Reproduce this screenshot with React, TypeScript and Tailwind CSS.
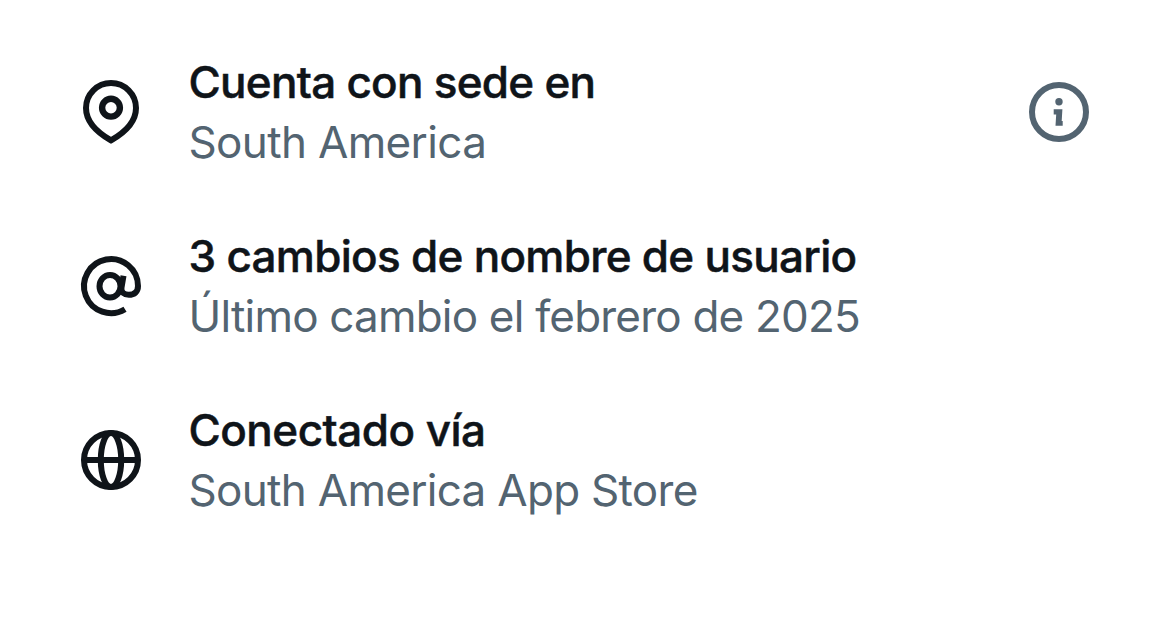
import React from "react";

function PinIcon() {
  return (
    <svg viewBox="0 0 72 72" className="h-[72px] w-[72px]" fill="none" stroke="currentColor" strokeWidth="6">
      <path d="M36 7C22.2 7 11 18.2 11 32c0 14.5 12.6 25.3 25 32.4C48.4 57.3 61 46.5 61 32 61 18.2 49.8 7 36 7z" />
      <circle cx="36" cy="31.7" r="8.9" strokeWidth="6.4" />
    </svg>
  );
}

function AtIcon() {
  return (
    <svg viewBox="0 0 72 72" className="h-[72px] w-[72px]" fill="none" stroke="currentColor" strokeWidth="6">
      <ellipse cx="35" cy="36.3" rx="10.5" ry="11.3" />
      <path d="M48.5 25.8L46.5 37.5C45.7 42.2 49 44.8 53.8 44.8 59.5 44.8 63 41.5 63 36A27 27 0 1 0 50 59.2" />
    </svg>
  );
}

function GlobeIcon() {
  return (
    <svg viewBox="0 0 72 72" className="h-[72px] w-[72px]" fill="none" stroke="currentColor" strokeWidth="6">
      <circle cx="36" cy="36" r="27" />
      <ellipse cx="36" cy="36" rx="10.2" ry="27" />
      <path d="M9 36h54" />
    </svg>
  );
}

function InfoIcon() {
  return (
    <svg viewBox="0 0 72 72" className="h-[72px] w-[72px]" fill="none">
      <circle cx="36" cy="36" r="27" stroke="currentColor" strokeWidth="6" />
      <circle cx="36" cy="25.7" r="3.7" fill="currentColor" />
      <path d="M30.7 33.3h8.7l-.7 11.8h1v4.7h-7.2l.7-11.4h-2.5z" fill="currentColor" />
    </svg>
  );
}

const rows = [
  {
    icon: <PinIcon />,
    title: "Cuenta con sede en",
    titleClass: "tracking-[-0.72px]",
    detail: "South America",
    detailClass: "tracking-[-0.65px]",
    info: true,
  },
  {
    icon: <AtIcon />,
    title: "3 cambios de nombre de usuario",
    titleClass: "tracking-[-0.7px]",
    detail: "Último cambio el febrero de 2025",
    detailClass: "tracking-[-0.8px]",
  },
  {
    icon: <GlobeIcon />,
    title: "Conectado vía",
    titleClass: "tracking-[-0.5px]",
    detail: "South America App Store",
    detailClass: "tracking-[-0.7px]",
  },
];

export default function App() {
  return (
    <div className="h-[620px] w-[1170px] overflow-hidden bg-white px-[75px] pt-[52px] font-['Inter','Liberation_Sans',sans-serif]">
      <ul className="flex flex-col gap-[54px]">
        {rows.map((row) => (
          <li key={row.title} className="flex h-[120px] items-center text-[#0f1419]">
            {row.icon}
            <div className="ml-[41.5px] flex-1 text-[44px] leading-[60px] whitespace-nowrap">
              <h2 className="font-medium [-webkit-text-stroke:0.5px_#0f1419]">
                <span className={row.titleClass}>{row.title}</span>
              </h2>
              <p className="text-[#536471]">
                <span className={row.detailClass}>{row.detail}</span>
              </p>
            </div>
            {row.info && (
              <button type="button" aria-label="Info" className="text-[#536471]">
                <InfoIcon />
              </button>
            )}
          </li>
        ))}
      </ul>
    </div>
  );
}
